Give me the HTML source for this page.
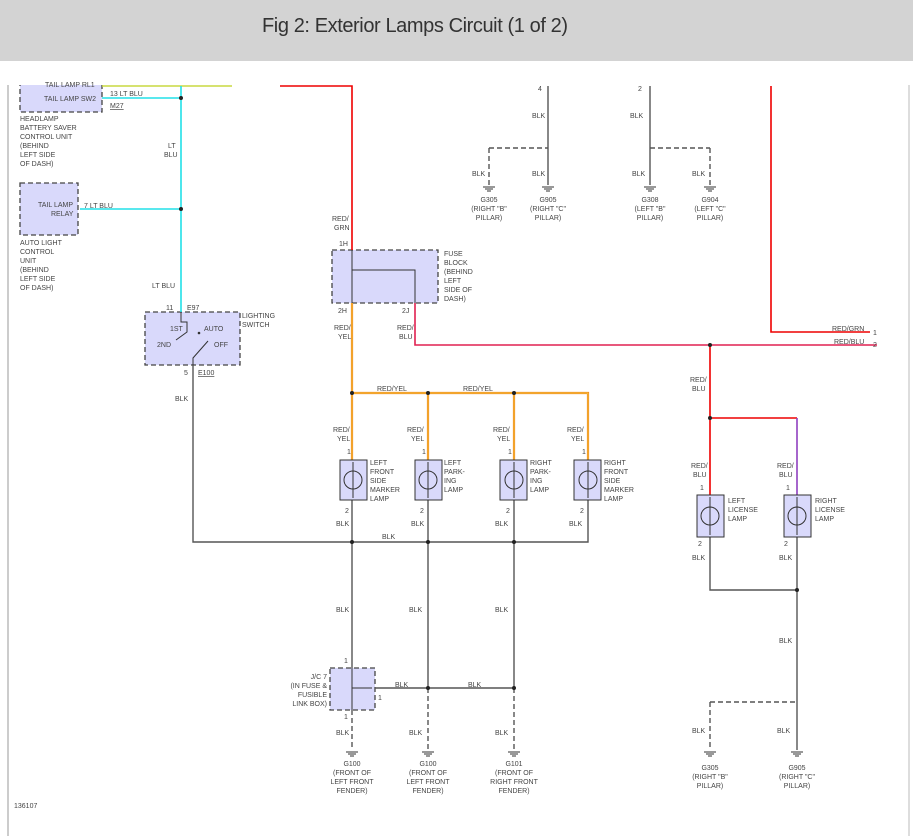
<!DOCTYPE html>
<html><head><meta charset="utf-8"><style>
html,body{margin:0;padding:0;background:#fff;width:913px;height:836px;overflow:hidden}
svg text{font-family:"Liberation Sans",sans-serif;font-size:7px;fill:#444}
</style></head><body>
<svg width="913" height="836" viewBox="0 0 913 836" xmlns="http://www.w3.org/2000/svg">
<rect x="0" y="0" width="913" height="61" fill="#d3d3d3"/>
<text x="262" y="32" textLength="306" style="font-size:20px;fill:#333">Fig 2: Exterior Lamps Circuit (1 of 2)</text>
<line x1="8" y1="85" x2="8" y2="836" stroke="#999" stroke-width="1"/>
<line x1="909" y1="85" x2="909" y2="836" stroke="#bbb" stroke-width="1"/>

<g fill="#d9d9fb" stroke="#444" stroke-width="1.3" stroke-dasharray="5,3">
<rect x="20" y="78" width="82" height="34"/>
<rect x="20" y="183" width="58" height="52"/>
<rect x="145" y="312" width="95" height="53"/>
<rect x="332" y="250" width="106" height="53"/>
<rect x="330" y="668" width="45" height="42"/>
</g>
<rect x="8" y="61" width="905" height="24" fill="#fff"/>
<!-- wires -->
<g fill="none" stroke-width="1.6">
<path d="M102 86H232" stroke="#c8d840"/>
<path d="M102 98H181M181 86V312M80 209H181" stroke="#22e0e8"/>
<path d="M280 86H352V250" stroke="#e00"/>
<path d="M771 86V332H870" stroke="#e00"/>
<path d="M415 303V345H877" stroke="#e02050"/>
<path d="M710 345V497M710 418H797" stroke="#e00"/>
<path d="M797 418V497" stroke="#9040c0"/>
<path d="M352 303V460M352 393H588V460M428 393V460M514 393V460" stroke="#f08020" stroke-width="2.2"/>
<path d="M352 303V460M352 393H588V460M428 393V460M514 393V460" stroke="#f4e040" stroke-width="0.7"/>
<g stroke="#555" stroke-width="1.4">
<path d="M193 365V542H514M588 500V542H514M352 500V668M428 500V688M514 500V688M375 688H514"/>
<path d="M548 86V185M650 86V185M710 537V590H797M797 537V750"/>
<path d="M352 710V750M428 688V750M514 688V750M489 148V185M710 148V185M710 702V750" stroke-dasharray="5,3"/>
<path d="M489 148H548M650 148H710M710 702H797" stroke-dasharray="5,3"/>
</g>
</g>
<!-- internal fuse block & switch lines -->
<g fill="none" stroke="#333" stroke-width="1">
<path d="M352 250V303M352 270H415V303"/>
<path d="M181 312V322H187V332L176 340M193 365V358L208 341M196 332"/>
<path d="M352 668V710M352 688H372"/>
</g>
<circle cx="199" cy="333" r="1.3" fill="#333"/>
<!-- lamps -->
<g fill="#d9d9fb" stroke="#333" stroke-width="1">
<rect x="340" y="460" width="27" height="40"/><rect x="415" y="460" width="27" height="40"/>
<rect x="500" y="460" width="27" height="40"/><rect x="574" y="460" width="27" height="40"/>
<rect x="697" y="495" width="27" height="42"/><rect x="784" y="495" width="27" height="42"/>
</g>
<g fill="none" stroke="#333" stroke-width="1">
<circle cx="353" cy="480" r="9"/><circle cx="428" cy="480" r="9"/><circle cx="514" cy="480" r="9"/><circle cx="588" cy="480" r="9"/>
<circle cx="710" cy="516" r="9"/><circle cx="797" cy="516" r="9"/>
<path d="M353 462V498M428 462V498M514 462V498M588 462V498M710 497V535M797 497V535"/>
</g>
<!-- dots -->
<g fill="#222">
<circle cx="181" cy="98" r="2"/><circle cx="181" cy="209" r="2"/>
<circle cx="352" cy="393" r="2"/><circle cx="428" cy="393" r="2"/><circle cx="514" cy="393" r="2"/>
<circle cx="352" cy="542" r="2"/><circle cx="428" cy="542" r="2"/><circle cx="514" cy="542" r="2"/>
<circle cx="428" cy="688" r="2"/><circle cx="514" cy="688" r="2"/>
<circle cx="710" cy="345" r="2"/><circle cx="710" cy="418" r="2"/><circle cx="797" cy="590" r="2"/>
</g>
<!-- grounds -->
<g stroke="#333" stroke-width="1" fill="none">
<path d="M483 187h12M485 189h8M487 191h4 M542 187h12M544 189h8M546 191h4 M644 187h12M646 189h8M648 191h4 M704 187h12M706 189h8M708 191h4"/>
<path d="M346 752h12M348 754h8M350 756h4 M422 752h12M424 754h8M426 756h4 M508 752h12M510 754h8M512 756h4 M704 752h12M706 754h8M708 756h4 M791 752h12M793 754h8M795 756h4"/>
</g>
<!-- texts -->
<text x="45" y="87">TAIL LAMP RL1</text>
<text x="44" y="101">TAIL LAMP SW2</text>
<text x="110" y="96">13   LT BLU</text>
<text x="110" y="108" text-decoration="underline">M27</text>
<text x="20" y="121">HEADLAMP</text><text x="20" y="130">BATTERY SAVER</text><text x="20" y="139">CONTROL UNIT</text><text x="20" y="148">(BEHIND</text><text x="20" y="157">LEFT SIDE</text><text x="20" y="166">OF DASH)</text>
<text x="168" y="148">LT</text><text x="164" y="157">BLU</text>
<text x="38" y="207">TAIL LAMP</text><text x="51" y="216">RELAY</text>
<text x="84" y="208">7   LT BLU</text>
<text x="20" y="245">AUTO LIGHT</text><text x="20" y="254">CONTROL</text><text x="20" y="263">UNIT</text><text x="20" y="272">(BEHIND</text><text x="20" y="281">LEFT SIDE</text><text x="20" y="290">OF DASH)</text>
<text x="152" y="288">LT BLU</text>
<text x="166" y="310">11</text><text x="187" y="310">E97</text>
<text x="242" y="318">LIGHTING</text><text x="242" y="327">SWITCH</text>
<text x="170" y="331">1ST</text><text x="204" y="331">AUTO</text><text x="157" y="347">2ND</text><text x="214" y="347">OFF</text>
<text x="184" y="375">5</text><text x="198" y="375" text-decoration="underline">E100</text>
<text x="175" y="401">BLK</text>
<text x="332" y="221">RED/</text><text x="334" y="230">GRN</text>
<text x="339" y="246">1H</text>
<text x="444" y="256">FUSE</text><text x="444" y="265">BLOCK</text><text x="444" y="274">(BEHIND</text><text x="444" y="283">LEFT</text><text x="444" y="292">SIDE OF</text><text x="444" y="301">DASH)</text>
<text x="338" y="313">2H</text><text x="402" y="313">2J</text>
<text x="334" y="330">RED/</text><text x="338" y="339">YEL</text>
<text x="397" y="330">RED/</text><text x="399" y="339">BLU</text>
<text x="377" y="391">RED/YEL</text><text x="463" y="391">RED/YEL</text>
<text x="832" y="331">RED/GRN</text><text x="873" y="335">1</text>
<text x="834" y="344">RED/BLU</text><text x="873" y="347">2</text>
<text x="690" y="382">RED/</text><text x="692" y="391">BLU</text>
<g>
<text x="333" y="432">RED/</text><text x="337" y="441">YEL</text>
<text x="407" y="432">RED/</text><text x="411" y="441">YEL</text>
<text x="493" y="432">RED/</text><text x="497" y="441">YEL</text>
<text x="567" y="432">RED/</text><text x="571" y="441">YEL</text>
<text x="347" y="454">1</text><text x="422" y="454">1</text><text x="508" y="454">1</text><text x="582" y="454">1</text>
<text x="345" y="513">2</text><text x="420" y="513">2</text><text x="506" y="513">2</text><text x="580" y="513">2</text>
<text x="336" y="526">BLK</text><text x="411" y="526">BLK</text><text x="495" y="526">BLK</text><text x="569" y="526">BLK</text>
</g>
<text x="370" y="465">LEFT</text><text x="370" y="474">FRONT</text><text x="370" y="483">SIDE</text><text x="370" y="492">MARKER</text><text x="370" y="501">LAMP</text>
<text x="444" y="465">LEFT</text><text x="444" y="474">PARK-</text><text x="444" y="483">ING</text><text x="444" y="492">LAMP</text>
<text x="530" y="465">RIGHT</text><text x="530" y="474">PARK-</text><text x="530" y="483">ING</text><text x="530" y="492">LAMP</text>
<text x="604" y="465">RIGHT</text><text x="604" y="474">FRONT</text><text x="604" y="483">SIDE</text><text x="604" y="492">MARKER</text><text x="604" y="501">LAMP</text>
<text x="382" y="539">BLK</text>
<text x="691" y="468">RED/</text><text x="693" y="477">BLU</text>
<text x="777" y="468">RED/</text><text x="779" y="477">BLU</text>
<text x="700" y="490">1</text><text x="786" y="490">1</text>
<text x="698" y="546">2</text><text x="784" y="546">2</text>
<text x="692" y="560">BLK</text><text x="779" y="560">BLK</text>
<text x="728" y="503">LEFT</text><text x="728" y="512">LICENSE</text><text x="728" y="521">LAMP</text>
<text x="815" y="503">RIGHT</text><text x="815" y="512">LICENSE</text><text x="815" y="521">LAMP</text>
<text x="336" y="612">BLK</text><text x="409" y="612">BLK</text><text x="495" y="612">BLK</text><text x="779" y="643">BLK</text>
<text x="344" y="663">1</text><text x="344" y="719">1</text><text x="378" y="700">1</text>
<g text-anchor="end"><text x="327" y="679">J/C 7</text><text x="327" y="688">(IN FUSE &amp;</text><text x="327" y="697">FUSIBLE</text><text x="327" y="706">LINK BOX)</text></g>
<text x="395" y="687">BLK</text><text x="468" y="687">BLK</text>
<text x="336" y="735">BLK</text><text x="409" y="735">BLK</text><text x="495" y="735">BLK</text>
<text x="692" y="733">BLK</text><text x="777" y="733">BLK</text>
<g text-anchor="middle">
<text x="352" y="766">G100</text><text x="352" y="775">(FRONT OF</text><text x="352" y="784">LEFT FRONT</text><text x="352" y="793">FENDER)</text>
<text x="428" y="766">G100</text><text x="428" y="775">(FRONT OF</text><text x="428" y="784">LEFT FRONT</text><text x="428" y="793">FENDER)</text>
<text x="514" y="766">G101</text><text x="514" y="775">(FRONT OF</text><text x="514" y="784">RIGHT FRONT</text><text x="514" y="793">FENDER)</text>
<text x="710" y="770">G305</text><text x="710" y="779">(RIGHT "B"</text><text x="710" y="788">PILLAR)</text>
<text x="797" y="770">G905</text><text x="797" y="779">(RIGHT "C"</text><text x="797" y="788">PILLAR)</text>
<text x="489" y="202">G305</text><text x="489" y="211">(RIGHT "B"</text><text x="489" y="220">PILLAR)</text>
<text x="548" y="202">G905</text><text x="548" y="211">(RIGHT "C"</text><text x="548" y="220">PILLAR)</text>
<text x="650" y="202">G308</text><text x="650" y="211">(LEFT "B"</text><text x="650" y="220">PILLAR)</text>
<text x="710" y="202">G904</text><text x="710" y="211">(LEFT "C"</text><text x="710" y="220">PILLAR)</text>
</g>
<text x="538" y="91">4</text><text x="638" y="91">2</text>
<text x="532" y="118">BLK</text><text x="630" y="118">BLK</text>
<text x="472" y="176">BLK</text><text x="532" y="176">BLK</text><text x="632" y="176">BLK</text><text x="692" y="176">BLK</text>
<text x="14" y="808">136107</text>
</svg>
</body></html>
